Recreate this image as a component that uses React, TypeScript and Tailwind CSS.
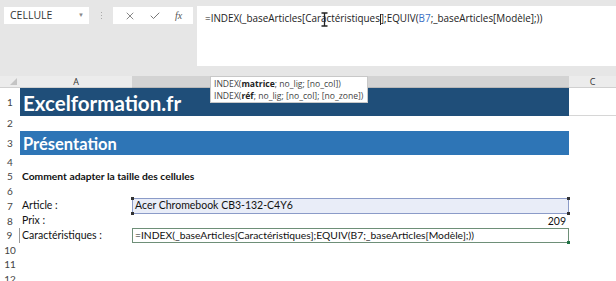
import { X, Check } from "lucide-react";

const cellFont = { fontFamily: "Lato, 'Open Sans', sans-serif" };

function RowLabel({ n, selected }: { n: number; selected?: boolean }) {
  return (
    <div
      className={
        "w-[20px] shrink-0 flex items-center justify-center text-[10px] text-[#444] " +
        (selected ? "border-r border-[#9a9a9a]" : "")
      }
    >
      {n}
    </div>
  );
}

function Handle({ className }: { className: string }) {
  return <span className={"absolute w-[3px] h-[3px] bg-[#333] " + className} />;
}

export default function App() {
  return (
    <div
      className="relative w-[616px] h-[281px] overflow-hidden bg-white"
      style={{ fontFamily: "'Open Sans', 'Noto Sans', sans-serif" }}
    >
      {/* formula bar */}
      <div className="h-[76px] bg-[#e6e6e6] flex items-start pt-[6px] pl-[4px]">
        <div className="w-[85px] h-[17px] bg-white flex items-center justify-between pl-[6px] pr-[5px] text-[10.5px] text-[#333] mt-[1px]">
          <span>CELLULE</span>
          <span className="text-[6px] text-[#888]">▼</span>
        </div>
        <div className="w-[24px] h-[17px] flex flex-col items-center justify-center gap-[2px] mt-[1px]">
          <span className="w-[1px] h-[1px] bg-[#aaa]" />
          <span className="w-[1px] h-[1px] bg-[#aaa]" />
          <span className="w-[1px] h-[1px] bg-[#aaa]" />
        </div>
        <div className="w-[80px] h-[17px] bg-white flex items-center justify-around px-[4px] mt-[1px] text-[#555]">
          <X size={12} strokeWidth={1.4} />
          <Check size={12} strokeWidth={1.6} />
          <span className="italic text-[10px] text-[#555]" style={{ fontFamily: "'Liberation Serif', serif" }}>
            fx
          </span>
        </div>
        <div className="ml-[4px] flex-1 h-[60px] bg-white pl-[8px] pt-[5px] text-[9.9px] text-[#222] relative">
          <span>=INDEX(_baseArticles[Caractéristiques</span>
          <span className="inline-block w-[1px] h-[11px] bg-[#222] align-middle" />
          <span>];EQUIV(</span>
          <span className="text-[#3a6fc4]">B7</span>
          <span>;_baseArticles[Modèle];))</span>
          <svg className="absolute left-[124px] top-[6px]" width="7" height="15" viewBox="0 0 7 15">
            <path d="M0.5 1h6M3.5 1v13M0.5 14h6" stroke="#222" strokeWidth="1.3" fill="none" />
          </svg>
        </div>
      </div>

      {/* column headers */}
      <div className="flex h-[12px] text-[9px] text-[#333]">
        <div className="w-[20px] bg-[#ececec] relative border-b border-[#d0d0d0]">
          <span className="absolute right-[3px] bottom-[2px] w-0 h-0 border-l-[7px] border-l-transparent border-b-[7px] border-b-[#c4c4c4]" />
        </div>
        <div className="w-[112px] bg-[#ececec] border-b border-[#d0d0d0] flex items-center justify-center">A</div>
        <div className="w-[437px] bg-[#d3d3d3] border-b border-[#b8b8b8]" />
        <div className="flex-1 bg-[#ececec] border-b border-[#d0d0d0] flex items-center justify-center">C</div>
      </div>

      {/* rows */}
      <div style={cellFont}>
        <div className="flex h-[28px]">
          <RowLabel n={1} />
          <div className="w-[549px] bg-[#1f4e79] flex items-center pl-[3px] text-white font-bold text-[20.5px] pt-[3px]">
            Excelformation.fr
          </div>
          <div className="flex-1 border-b border-[#d6d6d6]" />
        </div>
        <div className="flex h-[15px]">
          <RowLabel n={2} />
        </div>
        <div className="flex h-[24px]">
          <RowLabel n={3} />
          <div className="w-[549px] bg-[#2e75b6] flex items-center pl-[3px] text-white font-bold text-[16.5px] pt-[2px]">
            Présentation
          </div>
        </div>
        <div className="flex h-[14px]">
          <RowLabel n={4} />
        </div>
        <div className="flex h-[15px]">
          <RowLabel n={5} />
          <div className="pl-[2px] flex items-center font-bold text-[10.3px] text-[#111]">
            Comment adapter la taille des cellules
          </div>
        </div>
        <div className="flex h-[14px]">
          <RowLabel n={6} />
        </div>
        <div className="flex h-[16px]">
          <RowLabel n={7} />
          <div className="w-[112px] pl-[2px] flex items-center text-[10.5px] text-[#111]">Article :</div>
          <div className="w-[437px] relative bg-[#e9edf8] border border-[#8b9bc8] flex items-center pl-[2px] text-[10.5px] text-[#111]">
            Acer Chromebook CB3-132-C4Y6
            <Handle className="-left-[2px] -top-[2px]" />
            <Handle className="-right-[2px] -top-[2px]" />
            <Handle className="-left-[2px] -bottom-[2px]" />
            <Handle className="-right-[2px] -bottom-[2px]" />
          </div>
        </div>
        <div className="flex h-[14px]">
          <RowLabel n={8} />
          <div className="w-[112px] pl-[2px] flex items-center text-[10.5px] text-[#111]">Prix :</div>
          <div className="w-[437px] flex items-center justify-end pr-[3px] text-[10.5px] text-[#111] pt-[1px]">209</div>
        </div>
        <div className="flex h-[15px]">
          <RowLabel n={9} selected />
          <div className="w-[112px] pl-[2px] flex items-center text-[10.5px] text-[#111]">Caractéristiques :</div>
          <div className="w-[437px] relative border border-[#6e8f78] flex items-center pl-[2px] text-[10.3px] text-[#111]">
            =INDEX(_baseArticles[Caractéristiques];EQUIV(B7;_baseArticles[Modèle];))
            <Handle className="-right-[2px] -bottom-[2px] bg-[#217346]" />
          </div>
        </div>
        <div className="flex h-[14px]">
          <RowLabel n={10} />
        </div>
        <div className="flex h-[15px]">
          <RowLabel n={11} />
        </div>
        <div className="flex h-[15px]">
          <RowLabel n={12} />
        </div>
      </div>

      {/* function tooltip */}
      <div className="absolute left-[210px] top-[76px] w-[158px] h-[27px] bg-white border border-[#c8c8c8] px-[3px] pt-[1px] text-[8.6px] leading-[12px] text-[#444]">
        <div>
          INDEX(<b className="text-[#222]">matrice</b>; no_lig; [no_col])
        </div>
        <div>
          INDEX(<b className="text-[#222]">réf</b>; no_lig; [no_col]; [no_zone])
        </div>
      </div>
    </div>
  );
}
